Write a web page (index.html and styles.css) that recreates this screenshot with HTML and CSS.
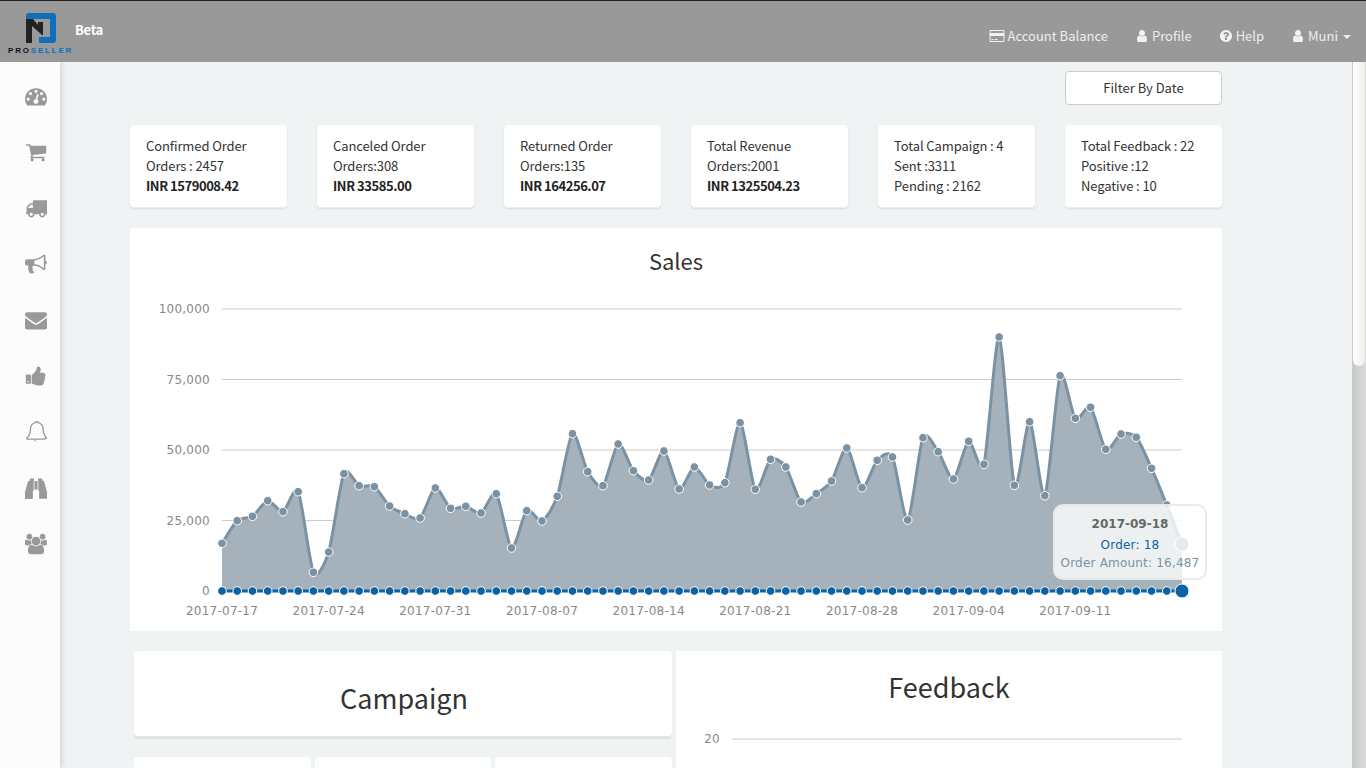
FILE: index.html
```html
<!DOCTYPE html>
<html lang="en">

<head>
    <meta charset="UTF-8">
    <meta name="viewport" content="width=device-width, initial-scale=1.0">
    <title>ProSeller Dashboard</title>
    <link rel="stylesheet" href="styles.css">
</head>

<body>
    <!-- icon sheet -->
    <svg class="icon-sheet" xmlns="http://www.w3.org/2000/svg">
        <symbol id="i-card" viewBox="0 0 1920 1792"><path d="M1760 128q66 0 113 47t47 113v1216q0 66-47 113t-113 47h-1600q-66 0-113-47t-47-113v-1216q0-66 47-113t113-47h1600zm-1600 128q-13 0-22.5 9.5t-9.5 22.5v224h1664v-224q0-13-9.5-22.5t-22.5-9.5h-1600zm1600 1280q13 0 22.5-9.5t9.5-22.5v-608h-1664v608q0 13 9.5 22.5t22.5 9.5h1600zm-1504-128v-128h256v128h-256zm384 0v-128h384v128h-384z"/></symbol>
        <symbol id="i-user" viewBox="0 0 1792 1792"><path d="M1536 1399q0 109-62.5 187t-150.5 78h-854q-88 0-150.5-78t-62.5-187q0-85 8.5-160.5t31.5-152 58.5-131 94-89 134.5-34.5q131 128 313 128t313-128q76 0 134.5 34.5t94 89 58.5 131 31.5 152 8.5 160.5zm-256-887q0 159-112.5 271.5t-271.5 112.5-271.5-112.5-112.5-271.5 112.5-271.5 271.5-112.5 271.5 112.5 112.5 271.5z"/></symbol>
        <symbol id="i-help" viewBox="0 0 1792 1792"><path d="M1024 1376v-192q0-14-9-23t-23-9h-192q-14 0-23 9t-9 23v192q0 14 9 23t23 9h192q14 0 23-9t9-23zm256-672q0-88-55.5-163t-138.5-116-170-41q-243 0-371 213-15 24 8 42l132 100q7 6 19 6 16 0 25-12 53-68 86-92 34-24 86-24 48 0 85.5 26t37.5 59q0 38-20 61t-68 45q-63 28-115.5 86.5t-52.5 125.5v36q0 14 9 23t23 9h192q14 0 23-9t9-23q0-19 21.5-49.5t54.5-49.5q32-18 49-28.5t46-35 44.5-48 28-60.5 12.5-81zm384 192q0 209-103 385.5t-279.5 279.5-385.5 103-385.5-103-279.5-279.5-103-385.5 103-385.5 279.5-279.5 385.5-103 385.5 103 279.5 279.5 103 385.5z"/></symbol>
        <symbol id="i-gauge" viewBox="0 0 1792 1792"><path d="M384 1152q0-53-37.5-90.5t-90.5-37.5-90.5 37.5-37.5 90.5 37.5 90.5 90.5 37.5 90.5-37.5 37.5-90.5zm192-448q0-53-37.5-90.5t-90.5-37.5-90.5 37.5-37.5 90.5 37.5 90.5 90.5 37.5 90.5-37.5 37.5-90.5zm428 481l101-382q6-26-7.5-48.5t-38.5-29.5-48 6.5-30 39.5l-101 382q-60 5-107 43.5t-63 98.5q-20 77 20 146t117 89 146-20 89-117q16-60-6-117t-72-91zm660-33q0-53-37.5-90.5t-90.5-37.5-90.5 37.5-37.5 90.5 37.5 90.5 90.5 37.5 90.5-37.5 37.5-90.5zm-640-640q0-53-37.5-90.5t-90.5-37.5-90.5 37.5-37.5 90.5 37.5 90.5 90.5 37.5 90.5-37.5 37.5-90.5zm448 192q0-53-37.5-90.5t-90.5-37.5-90.5 37.5-37.5 90.5 37.5 90.5 90.5 37.5 90.5-37.5 37.5-90.5zm320 448q0 261-141 483-19 29-54 29h-1402q-35 0-54-29-141-221-141-483 0-182 71-348t191-286 286-191 348-71 348 71 286 191 191 286 71 348z"/></symbol>
        <symbol id="i-cart" viewBox="0 0 1792 1792"><path d="M704 1536q0 52-38 90t-90 38-90-38-38-90 38-90 90-38 90 38 38 90zm896 0q0 52-38 90t-90 38-90-38-38-90 38-90 90-38 90 38 38 90zm128-1088v512q0 24-16.5 42.5t-40.5 21.5l-1044 122q13 60 13 70 0 16-24 64h920q26 0 45 19t19 45-19 45-45 19h-1024q-26 0-45-19t-19-45q0-11 8-31.5t16-36 21.5-40 15.5-29.5l-177-823h-204q-26 0-45-19t-19-45 19-45 45-19h256q16 0 28.5 6.5t19.5 15.5 13 24.5 8 26 5.5 29.5 4.5 26h1201q26 0 45 19t19 45z"/></symbol>
        <symbol id="i-truck" viewBox="0 0 1792 1792"><path d="M640 1408q0-52-38-90t-90-38-90 38-38 90 38 90 90 38 90-38 38-90zm-384-512h384v-256h-158q-13 0-22 9l-195 195q-9 9-9 22v30zm1280 512q0-52-38-90t-90-38-90 38-38 90 38 90 90 38 90-38 38-90zm256-1088v1024q0 15-4 26.5t-13.5 18.5-16.5 11.5-23.5 6-22.5 2-25.5 0-22.5-.5q0 106-75 181t-181 75-181-75-75-181h-384q0 106-75 181t-181 75-181-75-75-181h-64q-3 0-22.5.5t-25.5 0-22.5-2-23.5-6-16.5-11.5-13.5-18.5-4-26.5q0-26 19-45t45-19v-320q0-8-.5-35t0-38 2.5-34.5 6.5-37 14-30.5 22.5-30l198-198q19-19 50.5-32t58.5-13h160v-192q0-26 19-45t45-19h1024q26 0 45 19t19 45z"/></symbol>
        <symbol id="i-horn" viewBox="0 0 1792 1792"><path d="M1664 640q53 0 90.5 37.5t37.5 90.5-37.5 90.5-90.5 37.5v384q0 52-38 90t-90 38q-417-347-812-380-58 19-91 66t-31 100.5 40 92.5q-20 33-23 65.5t6 58 33.5 55 48 50 61.5 50.5q-29 58-111.5 83t-168.5 11.5-132-55.5q-7-23-29.5-87.5t-32-94.5-23-89-15-101 3.5-98.5 22-110.5h-122q-66 0-113-47t-47-113v-192q0-66 47-113t113-47h480q435 0 896-384 52 0 90 38t38 90v384zm-128 604v-954q-394 302-768 343v270q377 42 768 341z"/></symbol>
        <symbol id="i-mail" viewBox="0 0 1792 1792"><path d="M1792 710v794q0 66-47 113t-113 47h-1472q-66 0-113-47t-47-113v-794q44 49 101 87 362 246 497 345 57 42 92.5 65.5t94.5 48 110 24.5h2q51 0 110-24.5t94.5-48 92.5-65.5q170-123 498-345 57-39 100-87zm0-294q0 79-49 151t-122 123q-376 261-468 325-10 7-42.5 30.5t-54 38-52 32.5-57.5 27-50 9h-2q-23 0-50-9t-57.5-27-52-32.5-54-38-42.5-30.5q-91-64-262-182.5t-205-142.5q-62-42-117-115.5t-55-136.5q0-78 41.5-130t118.5-52h1472q65 0 112.5 47t47.5 113z"/></symbol>
        <symbol id="i-thumb" viewBox="0 0 1792 1792"><path d="M320 1344q0-26-19-45t-45-19q-27 0-45.5 19t-18.5 45q0 27 18.5 45.5t45.5 18.5q26 0 45-18.5t19-45.5zm160-512v640q0 26-19 45t-45 19h-288q-26 0-45-19t-19-45v-640q0-26 19-45t45-19h288q26 0 45 19t19 45zm1184 0q0 86-55 149 15 44 15 76 3 76-43 137 17 56 0 117-15 57-54 94 9 112-49 181-64 76-197 78h-129q-66 0-144-15.5t-121.5-29-120.5-39.5q-123-43-158-44-26-1-45-19.5t-19-44.5v-641q0-25 18-43.5t43-20.5q24-2 76-59t101-121q68-87 101-120 18-18 31-48t17.5-48.5 13.5-60.5q7-39 12.5-61t19.5-52 34-50q19-19 45-19 46 0 82.5 10.5t60 26 40 40.5 24 45 12 50 5 45 .5 39q0 38-9.5 76t-19 60-27.5 56q-3 6-10 18t-11 22-8 24h277q78 0 135 57t57 135z"/></symbol>
        <symbol id="i-bell" viewBox="0 0 1792 1792"><path fill="none" stroke="#999" stroke-width="110" d="M1664 1408q0 26-25 45t-65 19h-1356q-40 0-65-19t-25-45q50-42 91-88t85-119.5 74.5-158.5 50-206 19.5-260q0-152 117-282.5t307-158.5q-8-19-8-39 0-40 28-68t68-28 68 28 28 68q0 20-8 39 190 28 307 158.5t117 282.5q0 139 19.5 260t50 206 74.5 158.5 85 119.5 91 88z"/><path d="M896 1664q-60 0-104-44t-44-108h64q0 38 25 64t59 26z"/></symbol>
        <symbol id="i-binoculars" viewBox="0 0 1792 1792"><path d="M704 320v768q0 26-19 45t-45 19v576q0 26-19 45t-45 19h-512q-26 0-45-19t-19-45v-512l249-873q7-23 31-23h424zm320 0v704h-256v-704h256zm768 885v512q0 26-19 45t-45 19h-512q-26 0-45-19t-19-45v-576q-26 0-45-19t-19-45v-768h424q24 0 31 23zm-1056-1045v160h-352v-160q0-14 9-23t23-9h288q14 0 23 9t9 23zm672 0v160h-352v-160q0-14 9-23t23-9h288q14 0 23 9t9 23z"/></symbol>
        <symbol id="i-users" viewBox="0 0 1920 1792"><path d="M593 896q-162 5-265 128h-134q-82 0-138-40.5t-56-118.5q0-353 124-353 6 0 43.5 21t97.5 42.5 119 21.5q67 0 133-23-5 37-5 66 0 139 81 256zm1071 637q0 120-73 189.5t-194 69.5h-874q-121 0-194-69.5t-73-189.5q0-53 3.5-103.5t14-109 26.5-108.5 43-97.5 62-81 85.5-53.5 111.5-20q10 0 43 21.5t73 48 107 48 135 21.5 135-21.5 107-48 73-48 43-21.5q61 0 111.5 20t85.5 53.5 62 81 43 97.5 26.5 108.5 14 109 3.5 103.5zm-1024-1277q0 106-75 181t-181 75-181-75-75-181 75-181 181-75 181 75 75 181zm704 384q0 159-112.5 271.5t-271.5 112.5-271.5-112.5-112.5-271.5 112.5-271.5 271.5-112.5 271.5 112.5 112.5 271.5zm576 225q0 78-56 118.5t-138 40.5h-134q-103-123-265-128 81-117 81-256 0-29-5-66 66 23 133 23 59 0 119-21.5t97.5-42.5 43.5-21q124 0 124 353zm-128-609q0 106-75 181t-181 75-181-75-75-181 75-181 181-75 181 75 75 181z"/></symbol>
    </svg>

    <header class="topbar">
        <div class="brand">
            <div class="logo">
                <svg class="logo-mark" viewBox="0 0 32 32" xmlns="http://www.w3.org/2000/svg">
                    <path fill="#0f6fbd" d="M4 1H28Q31 1 31 4V28Q31 31 28 31H14V25H25V7H1V4Q1 1 4 1Z"/>
                    <path fill="#222" d="M1 7H8L13 13V10H18V23H17L7 14V31H1Z"/>
                </svg>
                <div class="logo-text">PRO<span>SELLER</span></div>
            </div>
            <span class="beta">Beta</span>
        </div>
        <nav class="topnav">
            <a href="#"><svg class="nav-icon wide"><use href="#i-card"/></svg>Account Balance</a>
            <a href="#"><svg class="nav-icon"><use href="#i-user"/></svg>Profile</a>
            <a href="#"><svg class="nav-icon"><use href="#i-help"/></svg>Help</a>
            <a href="#"><svg class="nav-icon"><use href="#i-user"/></svg>Muni<i class="caret"></i></a>
        </nav>
    </header>

    <div class="layout">
        <aside class="sidebar">
            <a href="#"><svg><use href="#i-gauge"/></svg></a>
            <a href="#"><svg><use href="#i-cart"/></svg></a>
            <a href="#"><svg><use href="#i-truck"/></svg></a>
            <a href="#"><svg><use href="#i-horn"/></svg></a>
            <a href="#"><svg><use href="#i-mail"/></svg></a>
            <a href="#"><svg><use href="#i-thumb"/></svg></a>
            <a href="#"><svg><use href="#i-bell"/></svg></a>
            <a href="#"><svg><use href="#i-binoculars"/></svg></a>
            <a href="#"><svg><use href="#i-users"/></svg></a>
        </aside>

        <main class="content">
            <div class="filter-row">
                <button class="filter-btn" type="button">Filter By Date</button>
            </div>

            <section class="stats">
                <div class="stat">Confirmed Order<br>Orders : 2457<br><b>INR 1579008.42</b></div>
                <div class="stat">Canceled Order<br>Orders:308<br><b>INR 33585.00</b></div>
                <div class="stat">Returned Order<br>Orders:135<br><b>INR 164256.07</b></div>
                <div class="stat">Total Revenue<br>Orders:2001<br><b>INR 1325504.23</b></div>
                <div class="stat">Total Campaign : 4<br>Sent :3311<br>Pending : 2162</div>
                <div class="stat">Total Feedback : 22<br>Positive :12<br>Negative : 10</div>
            </section>

            <section class="sales">
                <h3 class="sales-title">Sales</h3>
                <div class="chart" id="salesChart">
                    <div class="hover">
                        <div class="hover-label">2017-09-18</div>
                        <div class="hover-order">Order: 18</div>
                        <div class="hover-amount">Order Amount: 16,487</div>
                    </div>
                </div>
            </section>

            <section class="lower">
                <div class="campaign">
                    <div class="campaign-head">Campaign</div>
                    <div class="campaign-cards">
                        <div class="mini"></div>
                        <div class="mini"></div>
                        <div class="mini"></div>
                    </div>
                </div>
                <div class="feedback">
                    <h3 class="feedback-title">Feedback</h3>
                    <svg class="feedback-chart" xmlns="http://www.w3.org/2000/svg">
                        <line class="grid" x1="56" x2="506" y1="7" y2="7"/>
                        <text class="axis" x="44" y="11" text-anchor="end">20</text>
                    </svg>
                </div>
            </section>
        </main>

        <div class="scrollbar"><div class="scroll-thumb"></div></div>
    </div>

    <script src="chart.js"></script>
</body>

</html>
```

FILE: styles.css
```css
body {
    font-family: "Noto Sans CJK SC", "Source Sans Pro", "Open Sans", sans-serif;
    font-size: 13px;
    line-height: 20px;
    color: #333;
    background-color: #eff3f4;
    margin: 0;
    height: 768px;
    overflow: hidden;
}

a {
    color: inherit;
    text-decoration: none;
}

.icon-sheet {
    display: none;
}

/* top bar */
.topbar {
    height: 62px;
    box-sizing: border-box;
    border-top: 1px solid #222;
    background-color: #999;
    display: flex;
    justify-content: space-between;
    position: relative;
    z-index: 2;
}

.brand {
    display: flex;
    align-items: flex-start;
    padding-left: 8px;
}

.logo {
    width: 64px;
    display: flex;
    flex-direction: column;
    align-items: flex-start;
}

.logo-mark {
    width: 32px;
    height: 32px;
    margin-top: 11px;
    margin-left: 17px;
}

.logo-text {
    font-family: "Liberation Sans", sans-serif;
    font-size: 8px;
    font-weight: bold;
    line-height: 8px;
    letter-spacing: 1.8px;
    color: #111;
    margin-top: 3px;
    white-space: nowrap;
}

.logo-text span {
    color: #0f6fbd;
}

.beta {
    font-weight: bold;
    color: #fff;
    letter-spacing: -.3px;
    margin-left: 3px;
    margin-top: 19px;
}

.topnav {
    display: flex;
    gap: 27px;
    padding: 25px 15px 0 0;
    color: #eee;
}

.topnav a {
    display: flex;
    align-items: center;
    height: 20px;
}

.nav-icon {
    width: 14px;
    height: 14px;
    fill: #f2f2f2;
    margin-right: 3px;
}

.nav-icon.wide {
    width: 16px;
}

.caret {
    width: 0;
    height: 0;
    margin-left: 5px;
    margin-top: 2px;
    border-left: 4px solid transparent;
    border-right: 4px solid transparent;
    border-top: 4px solid #eee;
}

/* page body */
.layout {
    display: flex;
    height: 706px;
}

.sidebar {
    width: 60px;
    flex: none;
    background-color: #fcfcfc;
    box-shadow: 2px 0 6px rgba(0, 0, 0, .12);
    padding-top: 6px;
    box-sizing: border-box;
    position: relative;
    z-index: 1;
}

.sidebar a {
    display: flex;
    align-items: center;
    justify-content: center;
    height: 56px;
    padding-left: 12px;
}

.sidebar svg {
    width: 22px;
    height: 22px;
    fill: #999;
}

.content {
    flex: 1;
    overflow: hidden;
    padding: 9px 130px 0 70px;
}

.filter-row {
    display: flex;
    justify-content: flex-end;
    margin-bottom: 20px;
}

.filter-btn {
    width: 157px;
    height: 34px;
    background-color: #fff;
    border: 1px solid #ccc;
    border-radius: 4px;
    color: #333;
    font: inherit;
    padding: 0;
}

.stats {
    display: flex;
    gap: 30px;
    margin-bottom: 20px;
}

.stat {
    width: 157px;
    height: 83px;
    box-sizing: border-box;
    padding: 11px 16px 0;
    background-color: #fff;
    border-radius: 4px;
    box-shadow: 0 1px 2px rgba(0, 0, 0, .1);
    border-bottom: 1px solid #eee;
    letter-spacing: -.1px;
    white-space: nowrap;
}

.stat b {
    color: #222;
    letter-spacing: -.45px;
}

/* sales chart */
.sales {
    height: 403px;
    background-color: #fff;
}

.sales-title {
    margin: 0;
    height: 68px;
    line-height: 64px;
    text-align: center;
    font-size: 22px;
    font-weight: normal;
    color: #333;
}

.chart {
    position: relative;
    height: 335px;
}

.chart svg {
    display: block;
}

.grid {
    stroke: #ccc;
    stroke-width: 1;
}

.axis {
    font-family: "DejaVu Sans", sans-serif;
    font-size: 12px;
    letter-spacing: .25px;
    fill: #888;
}

.hover {
    position: absolute;
    left: 923px;
    top: 208px;
    width: 154px;
    height: 76px;
    box-sizing: border-box;
    padding: 6px 0;
    border: 2px solid rgba(230, 230, 230, .8);
    border-radius: 10px;
    background-color: rgba(255, 255, 255, .8);
    font-family: "DejaVu Sans", sans-serif;
    font-size: 12px;
    line-height: 18px;
    letter-spacing: .2px;
    text-align: center;
    white-space: nowrap;
}

.hover-label {
    font-weight: bold;
    color: #666;
    letter-spacing: 0;
    margin: 3px 0;
}

.hover-order {
    color: #0b62a4;
}

.hover-amount {
    color: #7a92a3;
}

/* bottom row */
.lower {
    display: flex;
    gap: 4px;
    margin: 20px 0 0 4px;
}

.campaign {
    width: 538px;
}

.campaign-head {
    height: 86px;
    line-height: 93px;
    box-sizing: border-box;
    background-color: #fff;
    border-radius: 4px;
    border-bottom: 1px solid #e6e6e6;
    box-shadow: 0 2px 1px rgba(0, 0, 0, .07);
    text-align: center;
    font-size: 27px;
    padding-left: 2px;
}

.campaign-cards {
    display: flex;
    gap: 4px;
    margin-top: 20px;
}

.mini {
    flex: 1;
    height: 100px;
    background-color: #fff;
    border-radius: 4px;
}

.feedback {
    width: 546px;
    height: 300px;
    background-color: #fff;
}

.feedback-title {
    margin: 0;
    height: 81px;
    line-height: 72px;
    text-align: center;
    font-size: 27px;
    font-weight: normal;
}

.feedback-chart {
    display: block;
    width: 546px;
    height: 100px;
}

/* page scrollbar, drawn over the right edge */
.scrollbar {
    width: 14px;
    flex: none;
    box-sizing: border-box;
    padding: 0 1px;
    background: linear-gradient(90deg, #c8c8c8, #dcdcdc);
}

.scroll-thumb {
    height: 304px;
    border-radius: 0 0 7px 7px;
    background: linear-gradient(90deg, #fff, #f0efed);
}
```

FILE: chart.js
```js
// daily sales, plotted as pixel y values read off the axis (0 = 295, 100,000 = 13)
var sales = [247.3, 224.7, 220.3, 204.7, 215.7, 195.7, 276.3, 256, 177.7, 189.7, 190.7, 210, 217.7, 222, 192, 212.3,
    210.3, 217, 197.7, 252, 214.7, 225, 200.3, 137.7, 175.7, 189.7, 148, 174.7, 184, 155, 193, 171, 189, 186.7,
    126.7, 193.3, 163.3, 171, 206, 197.7, 185, 152, 191.7, 164.3, 161, 224, 141.7, 155.7, 183, 145.3, 168.3, 41,
    189.3, 125.7, 199.7, 79.7, 122.3, 111.3, 153.3, 138, 141.3, 172.3, 209, 248.3];

var LEFT = 92, RIGHT = 1052, BASE = 295;
var NS = 'http://www.w3.org/2000/svg';
var step = (RIGHT - LEFT) / (sales.length - 1);

function el(name, attrs, text) {
    var node = document.createElementNS(NS, name);
    for (var key in attrs) {
        node.setAttribute(key, attrs[key]);
    }
    if (text) node.textContent = text;
    return node;
}

// same smoothing for every series
function smoothPath(points) {
    var grads = points.map(function(p, i) {
        var prev = points[i - 1] || p;
        var next = points[i + 1] || p;
        return (next.y - prev.y) / (next.x - prev.x);
    });
    var d = 'M' + points[0].x + ',' + points[0].y;
    for (var i = 1; i < points.length; i++) {
        var a = points[i - 1], b = points[i];
        var ix = (b.x - a.x) / 4;
        var y1 = Math.min(BASE, a.y + ix * grads[i - 1]);
        var y2 = Math.min(BASE, b.y - ix * grads[i]);
        d += 'C' + (a.x + ix) + ',' + y1 + ',' + (b.x - ix) + ',' + y2 + ',' + b.x + ',' + b.y;
    }
    return d;
}

var svg = el('svg', { width: 1092, height: 335 });

// grid and y axis
[[13, '100,000'], [83.5, '75,000'], [154, '50,000'], [224.5, '25,000'], [295, '0']].forEach(function(row) {
    svg.appendChild(el('line', { 'class': 'grid', x1: LEFT, x2: RIGHT, y1: row[0], y2: row[0] }));
    svg.appendChild(el('text', { 'class': 'axis', x: 80, y: Math.round(row[0]) + 4, 'text-anchor': 'end' }, row[1]));
});

// x axis, weekly
['2017-07-17', '2017-07-24', '2017-07-31', '2017-08-07', '2017-08-14', '2017-08-21', '2017-08-28', '2017-09-04',
    '2017-09-11'].forEach(function(label, i) {
    svg.appendChild(el('text', { 'class': 'axis', x: LEFT + i * 7 * step, y: 319, 'text-anchor': 'middle' }, label));
});

var points = sales.map(function(y, i) {
    return { x: LEFT + i * step, y: y };
});
var line = smoothPath(points);

svg.appendChild(el('path', { d: line + 'L' + RIGHT + ',' + BASE + 'L' + LEFT + ',' + BASE + 'Z', fill: '#a6b2bb' }));
svg.appendChild(el('path', { d: line, fill: 'none', stroke: '#7a92a3', 'stroke-width': 3 }));
svg.appendChild(el('line', { x1: LEFT, x2: RIGHT, y1: BASE, y2: BASE, stroke: '#0b62a4', 'stroke-width': 3 }));

// markers, the last day is the hovered one so it is larger
points.forEach(function(p, i) {
    var last = i === points.length - 1;
    svg.appendChild(el('circle', { cx: p.x, cy: p.y, r: last ? 7 : 4.3, fill: '#7a92a3', stroke: '#fff', 'stroke-width': 1 }));
    svg.appendChild(el('circle', { cx: p.x, cy: BASE, r: last ? 7 : 4.3, fill: '#0b62a4', stroke: '#fff', 'stroke-width': 1 }));
});

var chart = document.getElementById('salesChart');
chart.insertBefore(svg, chart.firstChild);
```
